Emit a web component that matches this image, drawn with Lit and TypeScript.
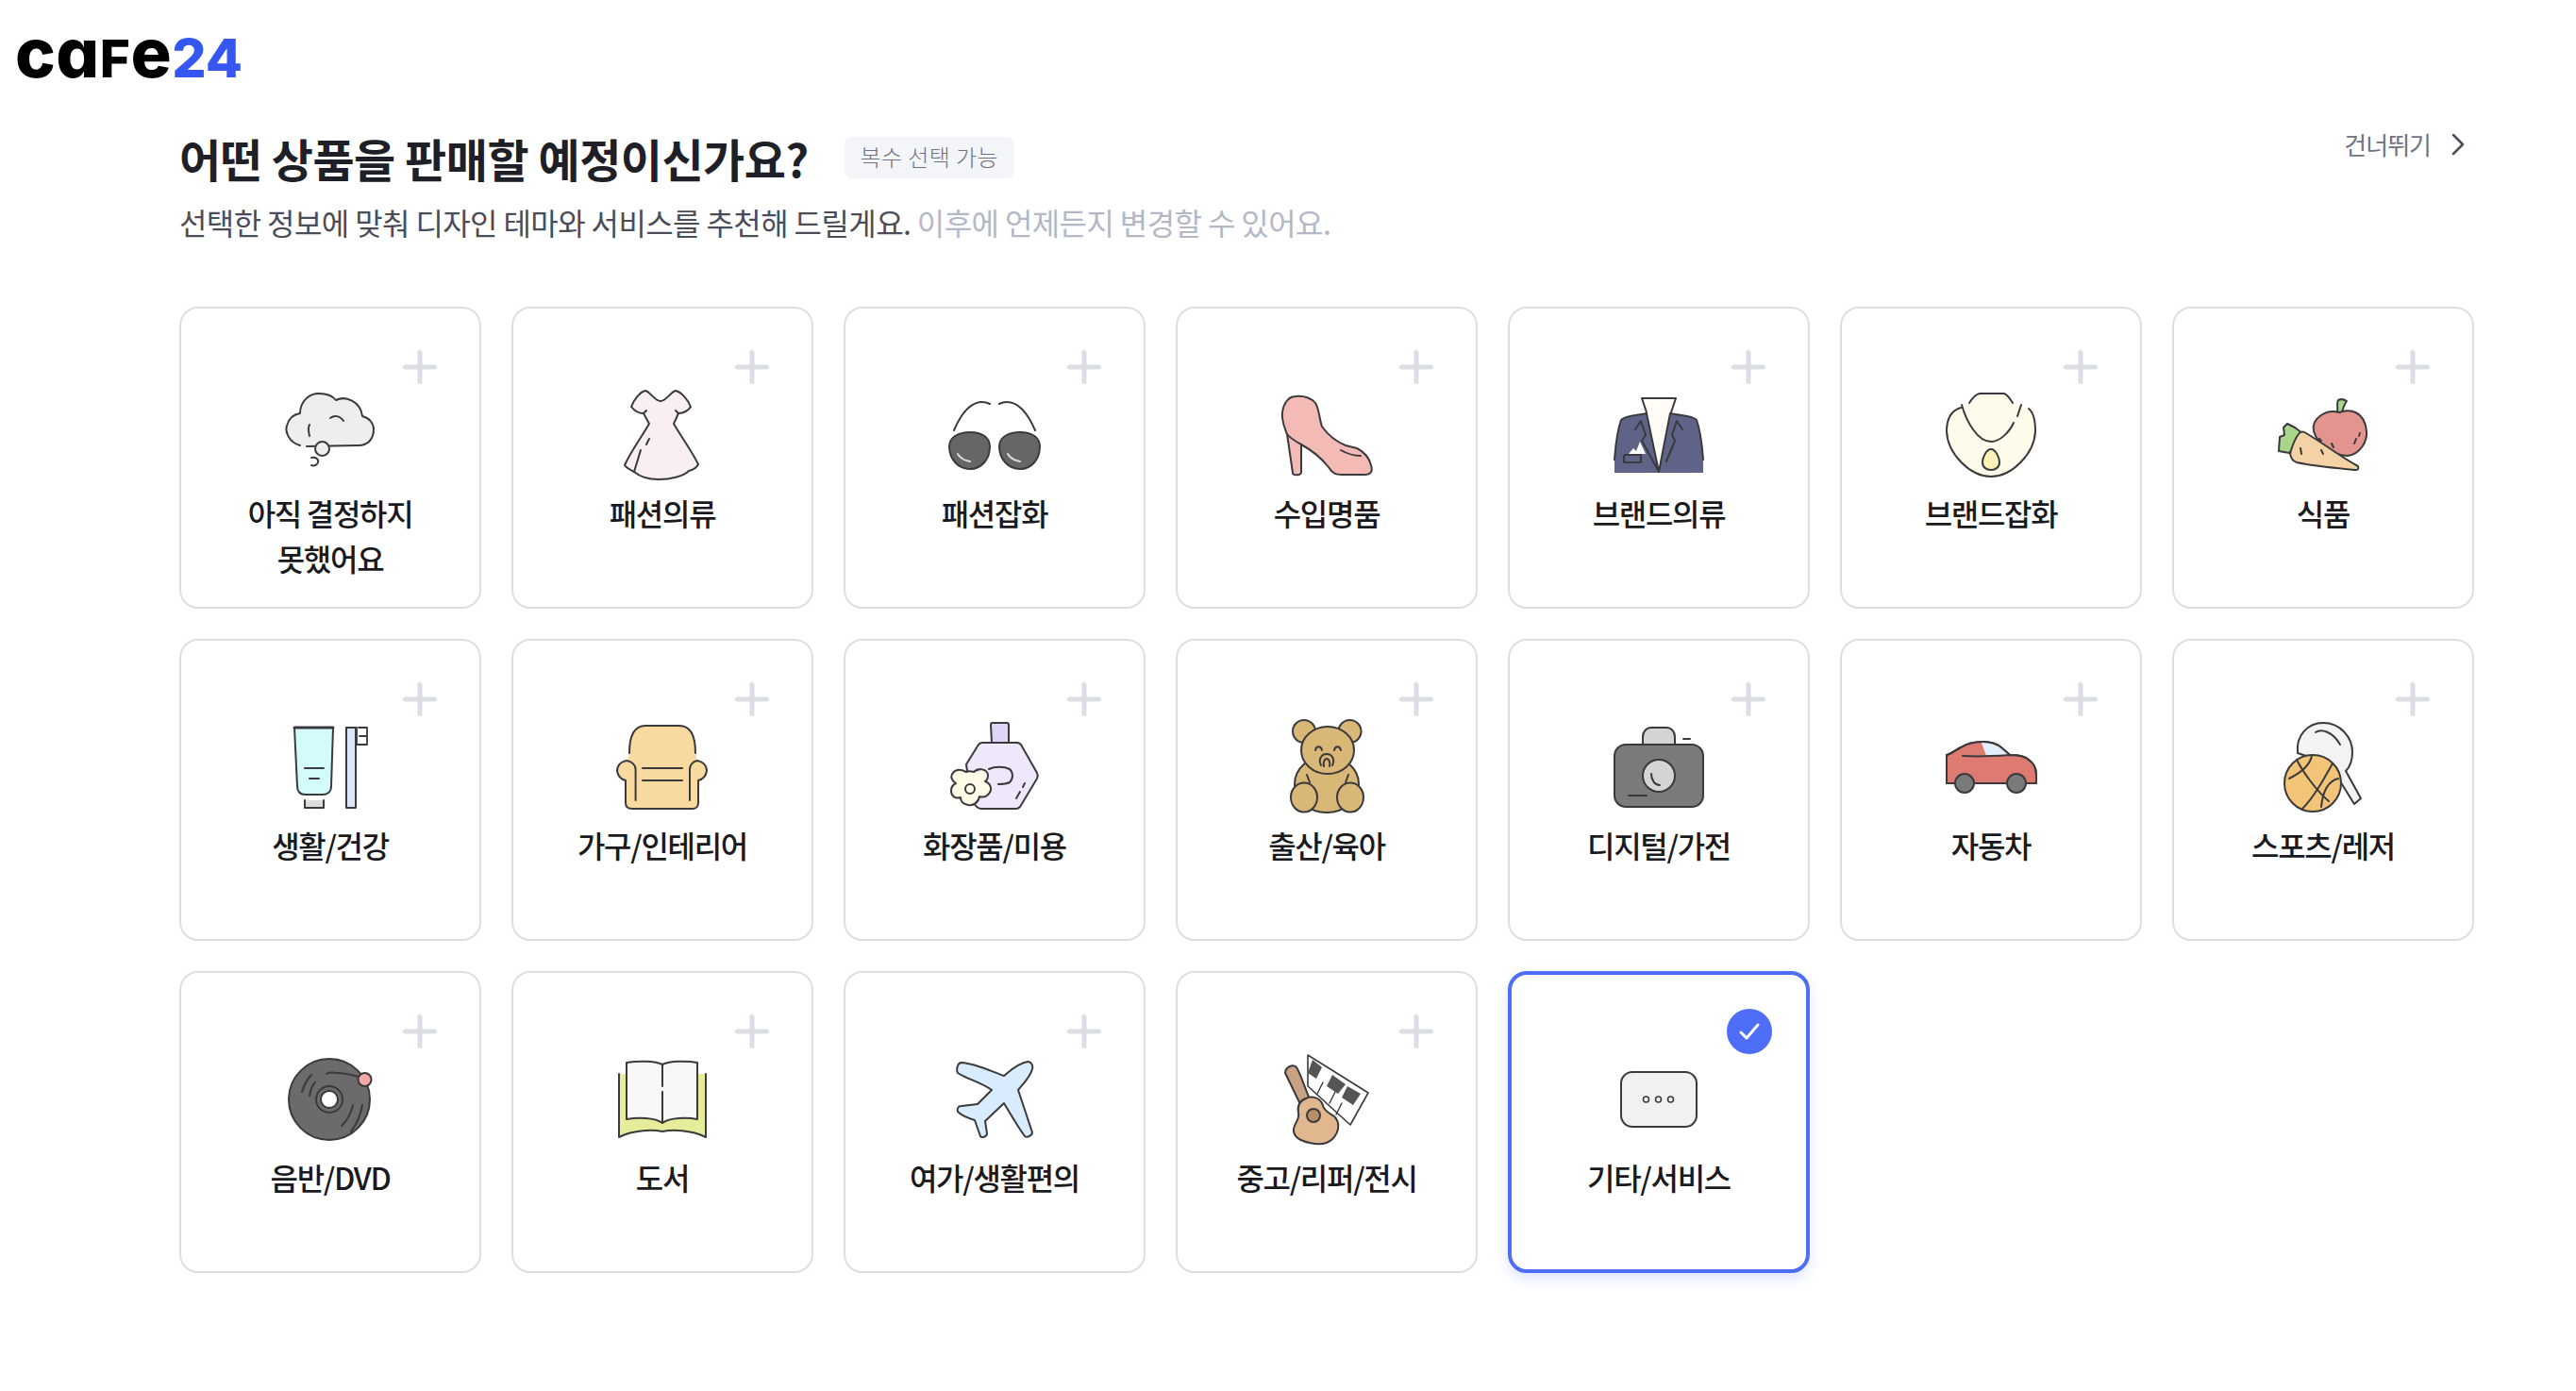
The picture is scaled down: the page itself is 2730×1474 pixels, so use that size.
import { LitElement, html, css, svg } from "lit";
import { customElement } from "lit/decorators.js";
import { classMap } from "lit/directives/class-map.js";

/* category pictures, all drawn on a 100x100 box */
const ICONS: Record<string, unknown> = {
  cloud: svg`
    <path fill="#eeeeee" stroke="none" d="M18 67C6 64 2 52 4 46C6 38 12 34 18 33C18 20 28 12 38 12C46 12 52 14 56 19C66 14 82 20 84 36C92 38 96 44 96 50C96 60 90 67 80 67L40 68Z"/>
    <path d="M18 67C6 64 2 52 4 46C6 38 12 34 18 33C18 20 28 12 38 12C46 12 52 14 56 19C66 14 82 20 84 36C92 38 96 44 96 50C96 60 90 67 80 67L25 68"/>
    <path d="M50 38C54 35 60 35 64 41M28 45C26 49 27 53 28 57"/>
    <circle cx="41.5" cy="70.5" r="7.5" fill="#eeeeee"/>
    <path d="M30 80C35 79 38 82 37 85C36 88 33 89 30 88"/>`,
  dress: svg`
    <path fill="#f9eef3" d="M32 9C37 10 42 20 48 20C54 20 59 10 64 9C70 10 78 20 80 26C78 30 72 33 67 33L62 44C70 58 82 74 88 87C86 91 82 93 78 94C72 100 58 103 46 103C34 103 26 100 20 95C16 93 12 91 10 88C16 74 28 58 36 44L30 33C25 33 20 30 17 26C19 20 26 10 32 9Z"/>
    <path d="M30 33L33 30M67 33L64 30M36 60L33 66M27 72L20 95"/>`,
  glasses: svg`
    <path d="M7 51C13 37 22 21 37 21C40 21 43 22 45 23M55 23C57 22 60 21 63 21C78 21 87 37 93 51"/>
    <path fill="#666666" d="M2 68C2 58 12 53 24 53C36 53 45 58 45 68C45 82 36 92 24 92C12 92 2 82 2 68Z"/>
    <path fill="#666666" d="M55 68C55 58 65 53 77 53C89 53 98 58 98 68C98 82 89 92 77 92C65 92 55 82 55 68Z"/>
    <path stroke="#dddddd" d="M11 76C14 81 18 83 24 84M64 76C67 81 71 83 77 84"/>`,
  shoe: svg`
    <path fill="#f4bbb6" d="M17 15C8 15 2 26 3 38C4 46 6 50 8 55L14 96C14 99 22 99 23 96L23 66C34 72 44 80 52 90C56 97 60 98 66 98L90 98C97 98 99 94 97 88C95 80 90 74 82 70L70 67C58 62 50 54 45 47C42 38 42 28 38 22C34 17 26 14 17 15Z"/>
    <path d="M8 55C12 60 16 62 23 66M65 72C72 76 78 78 86 78"/>`,
  jacket: svg`
    <path fill="#fffdf6" stroke="none" d="M32 17H68L64 32L50 90L36 32Z"/>
    <path d="M37 32L32 17H68L63 32"/>
    <path fill="#5f6388" stroke="none" d="M37 33L50 95L62 33C72 35 86 35 90 40C95 54 96 70 97 82V96H3V82C4 70 5 54 10 40C14 35 28 35 37 33Z"/>
    <path d="M97 82C96 70 95 54 90 40C86 35 72 35 62 33M3 82C4 70 5 54 10 40C14 35 28 35 37 33M37 33L50 95L62 33M25 50L31 41L36 56L32 62L49 93M75 50L69 41L64 56L67 62L58 84"/>
    <path fill="#ffffff" stroke="none" d="M18 76L23 70L26 73L30 63L36 76Z"/>
    <path d="M14 77H31V85H13V78"/>`,
  necklace: svg`
    <path fill="#fffbeb" stroke="none" d="M27 22L38 12H64L73 22L90 28C96 36 98 44 97 52C96 76 72 100 50 100C28 100 4 76 3 52C2 42 6 32 18 27Z"/>
    <path d="M27 22C30 17 34 13 38 12H64C67 13 70 17 73 22M18 27C8 30 3 38 3 52C4 76 28 100 50 100C72 100 96 76 97 52C97 40 95 32 90 28M19 24C24 42 36 63 50 63C60 63 70 52 74 43M82 24L78 36"/>
    <path fill="#fdf3b8" d="M50 71C55 71 59 80 59 85C59 90 55 93 50 93C45 93 41 90 41 85C41 80 45 71 50 71Z"/>`,
  food: svg`
    <path fill="#a9d68c" d="M65 32C66 27 64 22 66 19C68 18 72 18 75 20C72 24 71 28 70 32Z"/>
    <path fill="#e39490" d="M67 32C78 28 94 30 96 52C97 62 90 76 76 78C62 78 44 66 40 52C37 38 54 28 67 32Z"/>
    <path d="M85 60L83 65M89 54L88 57"/>
    <path fill="#a9d68c" d="M28 54L20 48L12 44L8 48L9 56L4 58L3 73L14 75L22 68Z"/>
    <path fill="#f4d2a5" d="M24 55C26 52 29 52 32 54C52 66 70 80 87 89C88 92 87 93 84 93C64 91 40 89 22 85C16 83 14 76 16 72C18 66 20 60 24 55Z"/>
    <path d="M26 70L27 76M48 72L50 76M59 65L61 69M46 60L48 62"/>`,
  tube: svg`
    <path fill="#d4fbfb" d="M12 14H53L51 76C51 82 47 85 42 85H24C18 85 15 82 15 76Z"/>
    <path stroke-width="3" d="M12 14H53"/>
    <path d="M23 57H43M28 68H38"/>
    <path fill="#dddddd" d="M23 91V99H43V91"/>
    <path fill="#dce6fb" d="M67 14H77V99H67Z"/>
    <path d="M80 14H89V32H78M81 23H89M78 14V32" stroke-width="1.800"/>`,
  chair: svg`
    <path fill="#f8d9a0" stroke="none" d="M15 41C15 22 20 12 32 12H68C80 12 85 22 85 41L87 50C94 50 98 54 97 60C96 66 92 69 89 70L88 94C88 98 85 100 82 100H18C14 100 11 98 11 94L11 70C7 69 3 66 2 60C2 54 6 50 13 50Z"/>
    <path d="M15 41C15 22 20 12 32 12H68C80 12 85 22 85 41M12 49C6 50 2 54 2 60C3 66 7 69 11 70V94C11 98 14 100 18 100H82C85 100 88 98 88 94V70C92 69 96 66 97 60C97 54 93 50 87 49C82 50 79 54 79 58V91M12 49C18 50 21.600 54 21.600 58V91M29 57H71M29 70H71"/>`,
  perfume: svg`
    <path fill="#e2d3f8" d="M46 11C46 10 47 9 48 9H63C64 9 65 10 65 11L65 30H47Z"/>
    <path fill="#efe7fc" d="M20 53L33 32C34 31 35 30 37 30H74C76 30 77 31 78 32L95 62C96 64 96 66 95 68L77 98C76 99 75 100 73 100H36C30 100 24 90 24 80Z"/>
    <path d="M44 58C50 55 60 55 66 58C70 62 70 68 66 72C62 74 58 74 54 74M82 73L80 77M77 82L73 89"/>
    <path fill="#fffbe6" d="M28 61C33 56 42 58 43 64C43 68 42 70 40 71C46 73 48 80 44 84C41 88 37 88 34 87C33 93 28 97 22 96C17 95 14 92 14 88C8 90 4 86 4 81C4 77 7 74 9 73C4 70 3 65 6 62C9 58 14 58 20 61C22 60 25 60 28 61Z"/>
    <circle cx="24" cy="79" r="5" fill="#fffbe6"/>`,
  bear: svg`
    <g fill="#d9b776">
      <circle cx="26" cy="18" r="12"/><circle cx="74.500" cy="18" r="12"/>
      <ellipse cx="50" cy="74" rx="34" ry="30"/>
      <ellipse cx="51" cy="38" rx="28" ry="25"/>
      <ellipse cx="26" cy="88" rx="14" ry="15.500"/><ellipse cx="75" cy="88" rx="14" ry="15.500"/>
    </g>
    <path d="M38 38C39 33 44 33 45 38M58 38C59 33 64 33 65 38M44 54C41 48 44 42 50 42C56 42 59 48 56 54M47 55C46 50 48 47 50 47C52 47 54 50 53 55M29 64L32 72M73 64L70 72"/>`,
  camera: svg`
    <path fill="#d4d4d4" d="M33 32V24C33 18 37 14 42 14H58C63 14 67 18 67 24V32"/>
    <path d="M76 26H83"/>
    <rect x="3" y="32" width="94" height="66" rx="12" fill="#7a7a7a"/>
    <circle cx="50" cy="65" r="17" fill="#d4d4d4"/>
    <path d="M42 63C42 70 46 75 51 75M18 86H37"/>`,
  car: svg`
    <path fill="#dd7a72" d="M3 43C8 42 12 38 18 35C26 30 34 29 41 29C50 29 58 32 62 36L70 43C78 43 86 44 90 48C96 52 98 58 98 64V73H3Z"/>
    <path fill="#e3eefb" stroke="none" d="M40 30C48 29 58 32 70 43L45 44Z"/>
    <path d="M3 43C8 42 12 38 18 35C26 30 34 29 41 29C50 29 58 32 62 36L70 43C78 43 86 44 90 48C96 52 98 58 98 64V73H3ZM20 44C34 45 56 44 70 43"/>
    <circle cx="22" cy="73" r="10" fill="#7a7a7a"/><circle cx="77" cy="73" r="10" fill="#7a7a7a"/>`,
  sports: svg`
    <path fill="#f3f3f3" d="M23 41C21 22 34 9 50 9C68 9 81 24 81 40C81 50 78 56 74 60L90 89L83 95L70 74L50 50Z"/>
    <path d="M42 19C48 15 60 18 68 32"/>
    <circle cx="39" cy="73" r="30" fill="#f2c478"/>
    <path d="M60 52C50 70 40 88 28 100M22 48C28 60 42 80 56 92M38 44C36 54 26 62 14 68M66 68C58 70 50 78 48 98"/>`,
  disc: svg`
    <circle cx="49" cy="56" r="43" fill="#6b6b6b"/>
    <circle cx="49" cy="56" r="14" fill="#6b6b6b"/>
    <circle cx="49" cy="56" r="9" fill="#ffffff"/>
    <path d="M46 29C50 26 54 28 58 28C66 28 72 30 80 32M20 48C22 42 26 34 30 30M28 52C29 46 30 42 34 38M74 62C72 72 68 78 62 84M84 62C82 74 78 82 72 90"/>
    <circle cx="86.500" cy="35" r="7" fill="#f3a8a5"/>`,
  book: svg`
    <path fill="#e6ec9a" stroke="none" d="M4 29H96V96C80 88 60 88 50 90C40 88 20 88 4 96Z"/>
    <path d="M4 29V96C20 88 40 88 50 90C60 88 80 88 96 96V29"/>
    <path fill="#f7f7f7" d="M12 17C24 15 42 15 50 19C58 15 76 15 87 17V77C76 75 58 75 50 81C42 75 24 75 12 77Z"/>
    <path d="M50 19V42M50 48V81"/>`,
  plane: svg`
    <path fill="#d8ecfd" d="M85 16C89 16 91 20 90 24C88 32 80 40 75 46L90 91C90 94 85 97 82 95C74 84 66 70 60 60L40 79L42 92C42 96 36 97 35 95L29 78C22 76 14 72 11 69C10 65 12 63 15 63L32 61L47 46C36 38 20 34 11 28C9 24 11 17 15 17C30 18 46 26 60 31C66 26 74 18 85 16Z"/>`,
  guitar: svg`
    <path fill="#ffffff" stroke-width="1.600" d="M30 9L94 49L75 83L30 42Z"/>
    <path stroke-width="1.400" d="M46 38L40 50M60 46L53 60M66 60L60 72"/>
    <g fill="#555555" stroke="none">
      <path d="M35 14L45 22L39 34L30 28Z"/><path d="M56 30L70 40L62 50L50 42Z"/><path d="M72 42L86 50L78 62L66 54Z"/>
    </g>
    <path fill="#c8a283" d="M6 28C6 22 14 18 18 22C22 28 26 42 33 58L22 61Z"/>
    <path fill="#e0b78e" d="M28 55C34 52 42 54 45 60C47 68 52 70 58 74C64 80 64 90 56 98C50 104 40 104 32 102C22 100 16 96 15 90C14 82 22 78 20 70C19 64 20 58 28 55Z"/>
    <circle cx="36" cy="73" r="7" fill="#b88f68"/>`,
  other: svg`
    <rect x="10" y="27" width="80" height="58" rx="12" fill="#f1f1f1"/>
    <circle cx="36.500" cy="56" r="3" fill="none" stroke-width="1.500"/>
    <circle cx="49.500" cy="56" r="3" fill="none" stroke-width="1.500"/>
    <circle cx="62.500" cy="56" r="3" fill="none" stroke-width="1.500"/>`,
};

const CATEGORIES = [
  { label: "아직 결정하지\n못했어요", icon: "cloud" },
  { label: "패션의류", icon: "dress" },
  { label: "패션잡화", icon: "glasses" },
  { label: "수입명품", icon: "shoe" },
  { label: "브랜드의류", icon: "jacket" },
  { label: "브랜드잡화", icon: "necklace" },
  { label: "식품", icon: "food" },
  { label: "생활/건강", icon: "tube" },
  { label: "가구/인테리어", icon: "chair" },
  { label: "화장품/미용", icon: "perfume" },
  { label: "출산/육아", icon: "bear" },
  { label: "디지털/가전", icon: "camera" },
  { label: "자동차", icon: "car" },
  { label: "스포츠/레저", icon: "sports" },
  { label: "음반/DVD", icon: "disc" },
  { label: "도서", icon: "book" },
  { label: "여가/생활편의", icon: "plane" },
  { label: "중고/리퍼/전시", icon: "guitar" },
  { label: "기타/서비스", icon: "other", selected: true },
];

@customElement("app-root")
export class AppRoot extends LitElement {
  static styles = css`
    :host {
      display: block;
      min-height: 1474px;
      background: #fff;
      font-family: "Noto Sans CJK KR", "Noto Sans", sans-serif;
      color: #1c1d22;
    }
    * {
      box-sizing: border-box;
    }

    .logo {
      display: flex;
      align-items: baseline;
      height: 104px;
      padding: 7px 0 0 16px;
      font-family: Inter, sans-serif;
      font-weight: 800;
      font-feature-settings: "cv11";
      line-height: 97px;
      letter-spacing: 0.5px;
    }
    .logo .low {
      font-size: 72px;
      color: #000;
    }
    .logo .cap {
      font-size: 55px;
      color: #000;
    }
    .logo .num {
      font-size: 57px;
      letter-spacing: 0;
      color: #3656f0;
    }

    main {
      padding: 33px 108px 0 190px;
    }

    .head {
      display: flex;
      justify-content: space-between;
      align-items: flex-start;
    }
    .title-row {
      display: flex;
      align-items: center;
      gap: 38px;
    }
    h1 {
      margin: 0;
      font-size: 48px;
      font-weight: 700;
      line-height: 60px;
      letter-spacing: -0.5px;
      color: #1f2027;
    }
    .hint {
      height: 44px;
      padding: 0 17px;
      border-radius: 8px;
      background: #f4f5f8;
      font-size: 24px;
      font-weight: 300;
      line-height: 42px;
      letter-spacing: 0.4px;
      color: #6f7380;
    }
    .sub {
      margin: 14px 0 0;
      font-size: 32px;
      line-height: 48px;
      letter-spacing: -0.6px;
      color: #4a4d57;
    }
    .sub span {
      color: #b4b7c6;
    }
    .skip {
      display: flex;
      align-items: center;
      gap: 22px;
      padding: 3px 10px 0 0;
      font-size: 26px;
      line-height: 26px;
      letter-spacing: -1px;
      color: #6f7384;
    }
    .skip svg {
      display: block;
      width: 14px;
      height: 24px;
    }

    .grid {
      display: grid;
      grid-template-columns: repeat(7, 320px);
      grid-auto-rows: 320px;
      gap: 32px;
      margin-top: 66px;
    }
    .card {
      position: relative;
      display: flex;
      flex-direction: column;
      align-items: center;
      padding-top: 78px;
      border: 2px solid #dcdee6;
      border-radius: 20px;
      background: #fff;
    }
    .card.selected {
      padding-top: 76px;
      border: 4px solid #4f6ef7;
      box-shadow: 0 6px 14px rgba(79, 110, 247, 0.18);
    }
    .pic {
      display: block;
      width: 100px;
      height: 100px;
      overflow: visible;
      fill: none;
      stroke: #3a3a3c;
      stroke-width: 2;
      stroke-linecap: round;
      stroke-linejoin: round;
    }
    .label {
      margin-top: 14px;
      font-size: 32px;
      font-weight: 500;
      line-height: 48px;
      letter-spacing: -1.3px;
      text-align: center;
      white-space: pre-line;
      color: #1a1a1e;
    }
    .plus {
      position: absolute;
      top: 44px;
      right: 45px;
      width: 36px;
      height: 36px;
    }
    .check {
      position: absolute;
      top: 36px;
      right: 36px;
      width: 48px;
      height: 48px;
    }
  `;

  private renderCard(c: { label: string; icon: string; selected?: boolean }) {
    return html`
      <div class=${classMap({ card: true, selected: !!c.selected })}>
        ${c.selected
          ? html`<svg class="check" viewBox="0 0 48 48">
              <circle cx="24" cy="24" r="24" fill="#4f6ef7" />
              <path d="M15 25l6 6 12-14" fill="none" stroke="#fff" stroke-width="3" stroke-linecap="round" stroke-linejoin="round" />
            </svg>`
          : html`<svg class="plus" viewBox="0 0 36 36">
              <path d="M18 2.500v31M2.500 18h31" stroke="#dcdee6" stroke-width="5" stroke-linecap="round" />
            </svg>`}
        <svg class="pic" viewBox="0 0 100 100">${ICONS[c.icon]}</svg>
        <div class="label">${c.label}</div>
      </div>
    `;
  }

  render() {
    return html`
      <header class="logo">
        <span class="low">ca</span><span class="cap">F</span><span class="low">e</span><span class="num">24</span>
      </header>
      <main>
        <div class="head">
          <div>
            <div class="title-row">
              <h1>어떤 상품을 판매할 예정이신가요?</h1>
              <div class="hint">복수 선택 가능</div>
            </div>
            <p class="sub">
              선택한 정보에 맞춰 디자인 테마와 서비스를 추천해 드릴게요.
              <span>이후에 언제든지 변경할 수 있어요.</span>
            </p>
          </div>
          <div class="skip">
            건너뛰기
            <svg viewBox="0 0 14 24">
              <path d="M2 2l10 10L2 22" fill="none" stroke="#4a4d57" stroke-width="2.500" stroke-linecap="round" stroke-linejoin="round" />
            </svg>
          </div>
        </div>
        <div class="grid">${CATEGORIES.map((c) => this.renderCard(c))}</div>
      </main>
    `;
  }
}
